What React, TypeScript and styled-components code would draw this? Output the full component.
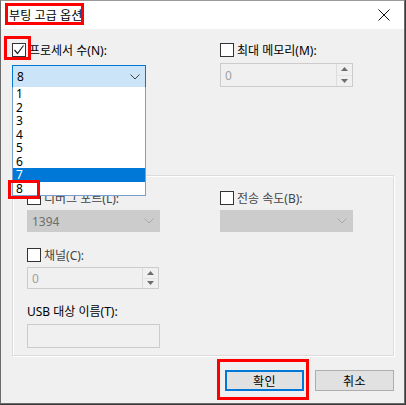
import React from "react";
import styled, { createGlobalStyle } from "styled-components";

const Global = createGlobalStyle`
  html, body { margin: 0; padding: 0; background: #3a3a3a; }
  body { font-family: "Noto Sans", "Noto Sans CJK KR", sans-serif; font-size: 12px; color: #000; }
  * { box-sizing: border-box; }
`;

const Stage = styled.div`
  position: relative;
  width: 406px;
  height: 405px;
  overflow: hidden;
`;

const Window = styled.div`
  width: 405px;
  height: 404px;
  border: 1px solid #6b6b6b;
  border-top-color: #9a9a9a;
  background: #f0f0f0;
  display: flex;
  flex-direction: column;
`;

const TitleBar = styled.div`
  height: 28px;
  background: #fff;
  display: flex;
  align-items: center;
  justify-content: space-between;
  padding: 0 14px 0 8px;
  font-size: 12px;
  letter-spacing: 0.1px;
`;

const Content = styled.div`
  position: relative;
  flex: 1;
  padding: 14px 11px 0 11px;
  display: flex;
  flex-direction: column;
`;

const Columns = styled.div<{ $first: number }>`
  display: grid;
  grid-template-columns: ${(p) => p.$first}px 1fr;
`;

const Field = styled.div<{ $mt?: number }>`
  position: relative;
  display: flex;
  flex-direction: column;
  margin-top: ${(p) => p.$mt ?? 0}px;
`;

const CheckRow = styled.label<{ $dim?: boolean }>`
  display: flex;
  align-items: center;
  height: 14px;
  gap: 3px;
  color: ${(p) => (p.$dim ? "#444" : "#000")};
  white-space: nowrap;
`;

const Box = styled.span`
  width: 14px;
  height: 14px;
  border: 1px solid #333;
  background: #fff;
  display: inline-flex;
  align-items: center;
  justify-content: center;
  flex: none;
`;

const Combo = styled.div<{ $w: number; $h: number; $active?: boolean; $disabled?: boolean }>`
  margin-top: ${(p) => (p.$active ? 8 : 5)}px;
  width: ${(p) => p.$w}px;
  height: ${(p) => p.$h}px;
  border: 1px solid ${(p) => (p.$active ? "#0078d7" : "#cccccc")};
  background: ${(p) => (p.$active ? "#cce4f7" : p.$disabled ? "#cccccc" : "#fff")};
  color: ${(p) => (p.$active ? "#000" : "#6d6d6d")};
  display: flex;
  align-items: center;
  justify-content: space-between;
  padding: 0 5px 0 4px;
`;

const SpinBox = styled.div<{ $w: number; $h: number; $mt: number }>`
  margin-top: ${(p) => p.$mt}px;
  width: ${(p) => p.$w}px;
  height: ${(p) => p.$h}px;
  border: 1px solid #cccccc;
  background: #f0f0f0;
  color: #a0a0a0;
  display: flex;
  align-items: stretch;
`;

const SpinText = styled.span`
  flex: 1;
  display: flex;
  align-items: center;
  padding-left: 4px;
`;

const SpinButtons = styled.div`
  width: 16px;
  border-left: 1px solid #dcdcdc;
  display: flex;
  flex-direction: column;
`;

const SpinBtn = styled.div`
  flex: 1;
  display: flex;
  align-items: center;
  justify-content: center;
  border-bottom: 1px solid #e4e4e4;
  &:last-child { border-bottom: none; }
`;

const TextBox = styled.div`
  margin-top: 5px;
  width: 133px;
  height: 24px;
  border: 1px solid #cccccc;
  background: #f0f0f0;
`;

const DropList = styled.div`
  position: absolute;
  left: 0;
  top: 44px;
  width: 134px;
  border: 1px solid #7a9fcf;
  border-top: none;
  background: #fff;
  z-index: 5;
`;

const DropItem = styled.div<{ $sel?: boolean }>`
  height: 13.5px;
  line-height: 13.5px;
  font-size: 12px;
  padding-left: 3px;
  background: ${(p) => (p.$sel ? "#0078d7" : "#fff")};
  color: ${(p) => (p.$sel ? "#fff" : "#000")};
`;

const Group = styled.div`
  margin-top: 87px;
  width: 382px;
  height: 181px;
  border: 1px solid #dcdcdc;
  box-shadow: inset 1px 1px 0 #fff, 1px 1px 0 #fff;
  padding: 15px 0 0 14px;
  display: flex;
  flex-direction: column;
`;

const SubLabel = styled.div`
  margin-top: 14px;
  height: 16px;
  display: flex;
  align-items: center;
`;

const ButtonRow = styled.div`
  margin-top: 14px;
  display: flex;
  justify-content: flex-end;
  gap: 11px;
  width: 382px;
`;

const Button = styled.button<{ $focus?: boolean }>`
  width: 79px;
  height: 21px;
  font: inherit;
  font-size: 12px;
  letter-spacing: 0.5px;
  background: #e1e1e1;
  border: ${(p) => (p.$focus ? "2px solid #0078d7" : "1px solid #adadad")};
  color: #000;
  padding: 0;
`;

const Mark = styled.div<{ $x: number; $y: number; $w: number; $h: number }>`
  position: absolute;
  left: ${(p) => p.$x}px;
  top: ${(p) => p.$y}px;
  width: ${(p) => p.$w}px;
  height: ${(p) => p.$h}px;
  border: 3px solid #ff0000;
  pointer-events: none;
  z-index: 10;
`;

const Chevron = ({ color = "#444" }: { color?: string }) => (
  <svg width="10" height="6" viewBox="0 0 10 6">
    <polyline points="0.5,0.5 5,5 9.5,0.5" fill="none" stroke={color} strokeWidth="1" />
  </svg>
);

const Arrow = ({ up }: { up?: boolean }) => (
  <svg width="7" height="4" viewBox="0 0 7 4">
    <polygon points={up ? "3.5,0 7,4 0,4" : "0,0 7,0 3.5,4"} fill="#6d6d6d" />
  </svg>
);

const Check = () => (
  <svg width="12" height="12" viewBox="0 0 12 12">
    <polyline points="1.5,6 4.5,9.5 10.5,1.5" fill="none" stroke="#222" strokeWidth="1.2" />
  </svg>
);

const Close = () => (
  <svg width="12" height="12" viewBox="0 0 12 12">
    <path d="M0.5 0.5 L11.5 11.5 M11.5 0.5 L0.5 11.5" stroke="#111" strokeWidth="1" />
  </svg>
);

const Spinner = ({ w, h, mt }: { w: number; h: number; mt: number }) => (
  <SpinBox $w={w} $h={h} $mt={mt}>
    <SpinText>0</SpinText>
    <SpinButtons>
      <SpinBtn>
        <Arrow up />
      </SpinBtn>
      <SpinBtn>
        <Arrow />
      </SpinBtn>
    </SpinButtons>
  </SpinBox>
);

export default function App() {
  return (
    <Stage>
      <Global />
      <Window>
        <TitleBar>
          <span>부팅 고급 옵션</span>
          <Close />
        </TitleBar>
        <Content>
          <Columns $first={208}>
            <Field>
              <CheckRow>
                <Box>
                  <Check />
                </Box>
                프로세서 수(N):
              </CheckRow>
              <Combo $w={134} $h={23} $active>
                <span>8</span>
                <Chevron />
              </Combo>
              <DropList>
                {["1", "2", "3", "4", "5", "6", "7", "8"].map((n) => (
                  <DropItem key={n} $sel={n === "7"}>
                    {n}
                  </DropItem>
                ))}
              </DropList>
            </Field>
            <Field>
              <CheckRow>
                <Box />
                최대 메모리(M):
              </CheckRow>
              <Spinner w={133} h={24} mt={6} />
            </Field>
          </Columns>
          <Group>
            <Columns $first={193}>
              <Field>
                <CheckRow $dim>
                  <Box />
                  디버그 포트(L):
                </CheckRow>
                <Combo $w={133} $h={22} $disabled>
                  <span>1394</span>
                  <Chevron color="#a8a8a8" />
                </Combo>
              </Field>
              <Field>
                <CheckRow $dim>
                  <Box />
                  전송 속도(B):
                </CheckRow>
                <Combo $w={133} $h={22} $disabled>
                  <span />
                  <Chevron color="#a8a8a8" />
                </Combo>
              </Field>
            </Columns>
            <Field $mt={16}>
              <CheckRow $dim>
                <Box />
                채널(C):
              </CheckRow>
              <Spinner w={132} h={22} mt={5} />
            </Field>
            <SubLabel>USB 대상 이름(T):</SubLabel>
            <TextBox />
          </Group>
          <ButtonRow>
            <Button $focus>확인</Button>
            <Button>취소</Button>
          </ButtonRow>
        </Content>
      </Window>
      <Mark $x={5} $y={3} $w={79} $h={22} />
      <Mark $x={4} $y={36} $w={27} $h={24} />
      <Mark $x={8} $y={180} $w={32} $h={19} />
      <Mark $x={217} $y={359} $w={92} $h={41} />
    </Stage>
  );
}
